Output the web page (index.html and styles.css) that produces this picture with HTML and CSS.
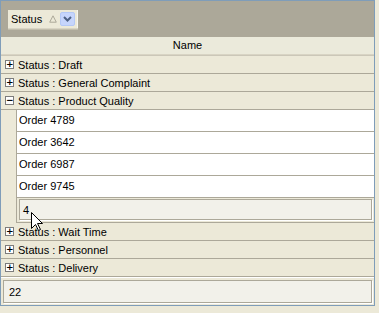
FILE: index.html
```html
<!DOCTYPE html>
<html>
<head>
<meta charset="utf-8">
<link rel="stylesheet" href="styles.css">
</head>
<body>
<div class="grid">
  <div class="group-panel">
    <div class="group-chip">
      <span class="chip-label">Status</span>
      <svg class="sort-tri" width="8" height="8" viewBox="0 0 8 8"><path d="M4 0.8 L7.3 7.2 L0.7 7.2 Z" fill="none" stroke="#aca899" stroke-width="1"/></svg>
      <span class="chip-drop"><svg width="9" height="6" viewBox="0 0 9 6"><path d="M1 1 L4.5 4.5 L8 1" fill="none" stroke="#4d6185" stroke-width="2"/></svg></span>
    </div>
  </div>
  <div class="col-header">Name</div>
  <div class="rows">
    <div class="grow"><span class="exp">+</span>Status : Draft</div>
    <div class="grow"><span class="exp">+</span>Status : General Complaint</div>
    <div class="grow"><span class="exp minus">−</span>Status : Product Quality</div>
    <div class="children">
      <div class="data-row">Order 4789</div>
      <div class="data-row">Order 3642</div>
      <div class="data-row">Order 6987</div>
      <div class="data-row">Order 9745</div>
      <div class="summary"><div class="sum-box">4</div></div>
    </div>
    <div class="grow"><span class="exp">+</span>Status : Wait Time</div>
    <div class="grow"><span class="exp">+</span>Status : Personnel</div>
    <div class="grow"><span class="exp">+</span>Status : Delivery</div>
  </div>
  <div class="footer"><div class="sum-box foot-box">22</div></div>
</div>
<svg class="cursor" width="13" height="20" viewBox="0 0 13 20"><path d="M0.5 0.5 L0.5 16.5 L4.5 12.5 L7.5 18.5 L9.5 17.5 L6.5 11.5 L11.5 11.5 Z" fill="#fff" stroke="#000" stroke-width="1"/></svg>
</body>
</html>
```
FILE: styles.css
```css
html, body {
  margin: 0;
  padding: 0;
}
body {
  background: #ece9d8;
  font-family: "Liberation Sans", Arial, sans-serif;
  font-size: 11px;
  color: #000;
  position: relative;
  width: 379px;
  height: 313px;
  overflow: hidden;
}
.grid {
  width: 373px;
  height: 304px;
  border: 1px solid #7f9db9;
  display: flex;
  flex-direction: column;
  background: #ece9d8;
}
.group-panel {
  height: 36px;
  background: #aca899;
  padding: 9px 0 0 7px;
  box-sizing: border-box;
  display: flex;
  align-items: flex-start;
}
.group-chip {
  height: 18px;
  width: 70px;
  box-sizing: border-box;
  background: #ece9d8;
  border-right: 1px solid #f6f5ee;
  box-shadow: 0 1px 0 #d8d4c4, 0 2px 0 #c2bead;
  display: flex;
  align-items: center;
  padding-left: 3px;
}
.chip-label {
  width: 38px;
}
.sort-tri {
  margin-left: -0.5px;
}
.chip-drop {
  margin-left: 3px;
  width: 15px;
  height: 14px;
  box-sizing: border-box;
  background: #c6d5fc;
  border: 1px solid #b4c8f6;
  border-radius: 2px;
  display: flex;
  align-items: center;
  justify-content: center;
}
.col-header {
  height: 17px;
  line-height: 17px;
  text-align: center;
  background: #ebeadb;
  border-bottom: 1px solid #d8d4c4;
  box-shadow: 0 1px 0 #cbc7b8;
  margin-bottom: 1px;
}
.rows {
  display: flex;
  flex-direction: column;
}
.grow {
  height: 17px;
  border-bottom: 1px solid #aca899;
  display: flex;
  align-items: center;
  background: #ece9d8;
  white-space: nowrap;
}
.exp {
  width: 9px;
  height: 9px;
  box-sizing: border-box;
  border: 1px solid #7c7c7c;
  background: #fff;
  margin: 0 4px 0 4px;
  font-size: 9px;
  line-height: 7px;
  text-align: center;
  font-family: "DejaVu Sans", sans-serif;
  font-weight: bold;
  overflow: hidden;
}
.children {
  margin-left: 15px;
  border-left: 1px solid #aca899;
  display: flex;
  flex-direction: column;
}
.data-row {
  height: 21px;
  line-height: 21px;
  background: #fff;
  border-bottom: 1px solid #aca899;
  padding-left: 2px;
}
.summary {
  height: 25px;
  box-sizing: border-box;
  padding: 1px 2px 2px 2px;
  border-bottom: 1px solid #aca899;
  background: #ece9d8;
}
.sum-box {
  height: 100%;
  box-sizing: border-box;
  background: #f2f1ea;
  border: 1px solid #aca899;
  box-shadow: 1px 1px 0 #fff;
  padding-left: 3px;
  display: flex;
  align-items: center;
}
.footer {
  height: 28px;
  box-sizing: border-box;
  border-top: 1px solid #fff;
  padding: 2px 2px 2px 2px;
  background: #ece9d8;
}
.foot-box {
  padding-left: 5px;
}
.cursor {
  position: absolute;
  left: 31px;
  top: 212px;
}
```
